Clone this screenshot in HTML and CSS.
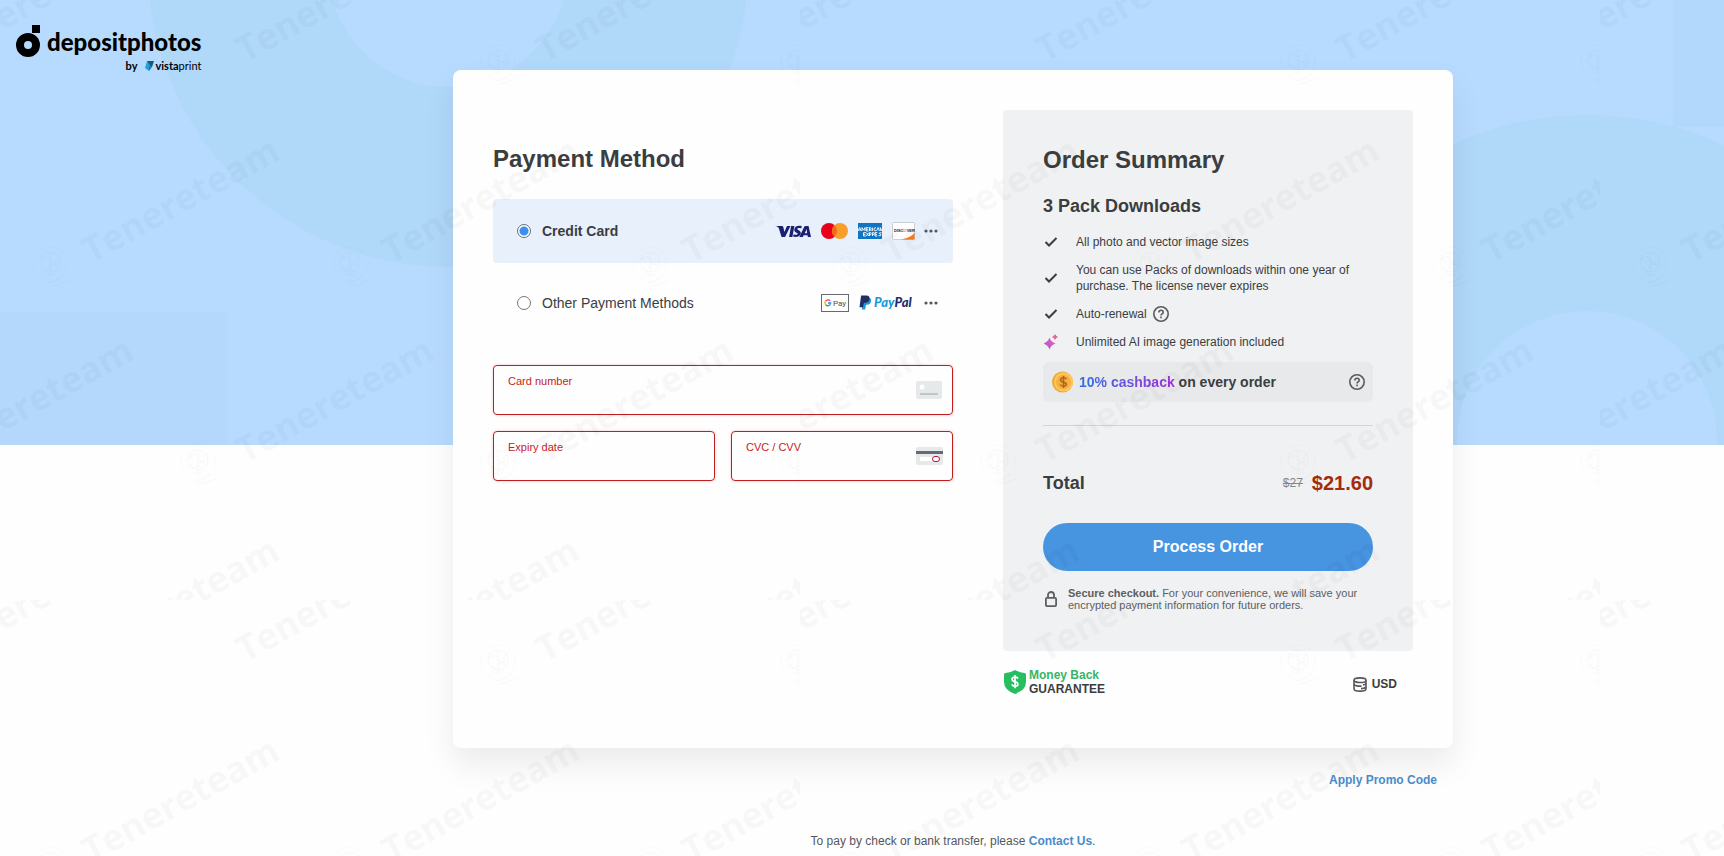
FILE: index.html
```html
<!DOCTYPE html>
<html lang="en">
<head>
<meta charset="utf-8">
<meta name="viewport" content="width=device-width, initial-scale=1">
<title>Depositphotos – Payment</title>
<link rel="stylesheet" href="styles.css">
</head>
<body>
<svg class="hero" viewBox="0 0 1724 445" preserveAspectRatio="xMidYMin slice" aria-hidden="true">
  <rect width="1724" height="445" fill="#b7dbff"/>
  <g fill="none" stroke="#b0d8f9">
    <circle cx="448" cy="-33" r="210" stroke-width="180"/>
    <circle cx="1587" cy="441" r="228" stroke-width="196"/>
  </g>
  <rect y="312" width="228" height="133" fill="#b4d7fc"/>
  <rect x="1673" width="51" height="127" fill="#b2d9fb"/>
</svg>

<div class="page">
  <header class="brand">
    <a class="logo" href="#" aria-label="depositphotos by vistaprint">
      <svg class="logo-mark" width="24" height="32" viewBox="0 0 24 32" aria-hidden="true">
        <rect x="16" width="8" height="8"/>
        <circle cx="12" cy="20" r="8" fill="none" stroke="#000" stroke-width="8"/>
      </svg>
      <span class="logo-words">
        <span class="logo-name">depositphotos</span>
        <span class="logo-by">
          <b>by</b>
          <svg width="9" height="10" viewBox="0 0 9 10" aria-hidden="true"><path d="M2 0h7L7 6 4 5z" fill="#155a78"/><path d="M2 0l3 4-1 6-4-3z" fill="#23a0d8"/><path d="M4 5l3 1-3 4z" fill="#1b789f"/></svg>
          <span class="vista"><b>vista</b>print</span>
        </span>
      </span>
    </a>
  </header>

  <div class="content">
    <main class="card">
      <form class="payment">
        <h1 class="title">Payment Method</h1>
        <label class="method method-active">
          <input class="radio" type="radio" name="method" checked>
          <span class="method-name">Credit Card</span>
          <span class="brands">
            <svg width="36" height="13" viewBox="0 0 34 14" preserveAspectRatio="none" role="img" aria-label="Visa"><g fill="#1a1f71"><path d="M0 1h6.200c.9 0 1.500.5 1.700 1.400l1 5.200L11.300 1h3.300L9.500 13H6.200L3.700 3.800C3.300 2.300 1.800 1.600 0 1.200z"/><path d="M15.200 1h3.100l-1.900 12h-3.100z"/><path d="M25.300 1.300l-.5 2.500c-1.900-.8-3.700-.5-3.700.4 0 1.300 3.300 1.400 3.300 4.500 0 3.300-3.700 5.100-7.300 3.800l.5-2.600c1.800 1 3.900.8 3.900-.4 0-1.300-3.300-1.500-3.300-4.500 0-3.400 3.700-4.900 7.100-3.700z"/><path fill-rule="evenodd" d="M29.200 1h2.500L34 13h-2.900l-.4-1.900h-3.600L26.300 13H23l4.600-11c.3-.7.800-1 1.600-1zm.7 3.400l-1.800 4.400h2.200z"/></g></svg>
            <svg width="27" height="16" viewBox="0 0 27 16" role="img" aria-label="Mastercard"><circle cx="8" cy="8" r="8" fill="#eb001b"/><circle cx="19" cy="8" r="8" fill="#f79e2b"/><path d="M13.500 2.200a8 8 0 010 11.600 8 8 0 010-11.600z" fill="#f7661b"/></svg>
            <svg width="24" height="16" viewBox="0 0 24 16" role="img" aria-label="American Express"><rect width="24" height="16" fill="#1275c4"/><g stroke="#fff" fill="none" stroke-width=".9"><path d="M0 8l1.600-3.500L3.200 8M.8 7h1.700M4 8V4.600l1.500 2.500L7 4.600V8M10.500 4.600H8.300V8h2.300M8.300 6.300h2M11.500 8V4.600h1.300q1 1 0 2h-1.300M13 6.600V8M14.600 4.600V8M18 4.800q-2-.5-2 1.500t2 1.500M18.600 8l1.500-3.500L21.500 8M22.300 8V4.600L24 8M7.800 9.600H5.500V13h2.300M5.500 11.300h2M8.300 9.600l2.500 3.400M10.800 9.600L8.300 13M11.500 13V9.600h1.300q1 1 0 2h-1.300M14.500 13V9.600h1.400q1 1 0 2h-1.400M19.300 9.600H17V13h2.300M17 11.300h2M23.500 9.800q-2.500-.5-2.300.7l1.700.9q.8 1.600-2.400 1.300"/></g></svg>
            <svg width="23" height="18" viewBox="0 0 23 18" role="img" aria-label="Discover"><rect x=".5" y=".5" width="22" height="17" rx="1" fill="#fff" stroke="#c9cdd2"/><path d="M22.500 11V17.500H9q9-1.500 13.500-6.500z" fill="#ef7a22"/><text x="2" y="10" class="disc">DISC<tspan fill="#ef7a22">O</tspan>VER</text></svg>
            <svg class="dots" width="14" height="4" viewBox="0 0 14 4" aria-label="more"><circle cx="2" cy="2" r="1.600"/><circle cx="7" cy="2" r="1.600"/><circle cx="12" cy="2" r="1.600"/></svg>
          </span>
        </label>
        <label class="method">
          <input class="radio" type="radio" name="method">
          <span class="method-name">Other Payment Methods</span>
          <span class="brands">
            <svg width="28" height="18" viewBox="0 0 28 18" role="img" aria-label="Google Pay"><rect x=".5" y=".5" width="27" height="17" fill="#fff" stroke="#66696d"/><g fill="none" stroke-width="1.300"><path d="M9.100 6.700A3 3 0 004.700 7" stroke="#ea4335"/><path d="M4.700 7a3 3 0 000 3.800" stroke="#fbbc04"/><path d="M4.700 10.800a3 3 0 004 .2" stroke="#34a853"/><path d="M8.700 11a3 3 0 001-2H7" stroke="#4285f4"/></g><text x="12" y="12" class="gpay">Pay</text></svg>
            <svg width="56" height="16" viewBox="0 0 56 16" role="img" aria-label="PayPal"><path d="M5.200 3h5.600c2 1 1.500 4.800-.3 6-1.400.9-3 .7-3.600 1L6.200 14.500H2.800z" fill="#179bd7"/><path d="M2.100.5h5.600c3.700.2 3.500 4.500 1.500 6.300-1.500 1.200-4 .9-4.400 1.500L4 12.200H.5z" fill="#222d65"/><text x="15" y="12" class="paypal"><tspan fill="#179bd7">Pay</tspan><tspan fill="#222d65">Pal</tspan></text></svg>
            <svg class="dots" width="14" height="4" viewBox="0 0 14 4" aria-label="more"><circle cx="2" cy="2" r="1.600"/><circle cx="7" cy="2" r="1.600"/><circle cx="12" cy="2" r="1.600"/></svg>
          </span>
        </label>

        <div class="fields">
          <div class="field field-wide">
            <div class="field-text">
              <label for="card-number">Card number</label>
              <input id="card-number" type="text" inputmode="numeric">
            </div>
            <svg width="28" height="18" viewBox="0 0 28 18" aria-hidden="true"><rect x="1" width="26" height="18" rx="2" fill="#e6e9ea"/><circle cx="7" cy="6" r="2.500" fill="#fff"/><rect x="5" y="12" width="18" height="2" fill="#c2c6c9"/></svg>
          </div>
          <div class="field">
            <div class="field-text">
              <label for="expiry">Expiry date</label>
              <input id="expiry" type="text" inputmode="numeric">
            </div>
          </div>
          <div class="field">
            <div class="field-text">
              <label for="cvc">CVC / CVV</label>
              <input id="cvc" type="text" inputmode="numeric">
            </div>
            <svg width="27" height="18" viewBox="0 0 27 18" aria-hidden="true"><rect width="27" height="18" rx="2" fill="#e6e9ea"/><rect y="4" width="27" height="3" fill="#666a78"/><rect x="4" y="10" width="12" height="4" fill="#fff"/><rect x="16.500" y="9.500" width="7" height="5" rx="2.500" fill="#fff" stroke="#b5123e"/></svg>
          </div>
        </div>
      </form>

      <aside class="side">
        <section class="summary">
          <h2 class="title">Order Summary</h2>
          <h3 class="pack">3 Pack Downloads</h3>
          <ul class="features">
            <li><svg class="check" width="14" height="10" viewBox="0 0 14 10" aria-hidden="true"><path d="M1.500 5l3.500 3.500 7.500-7.500"/></svg><span>All photo and vector image sizes</span></li>
            <li><svg class="check" width="14" height="10" viewBox="0 0 14 10" aria-hidden="true"><path d="M1.500 5l3.500 3.500 7.500-7.500"/></svg><span>You can use Packs of downloads within one year of purchase. The license never expires</span></li>
            <li><svg class="check" width="14" height="10" viewBox="0 0 14 10" aria-hidden="true"><path d="M1.500 5l3.500 3.500 7.500-7.500"/></svg><span>Auto-renewal</span>
              <button class="help" type="button" aria-label="About auto-renewal"><svg width="16" height="16" viewBox="0 0 16 16" aria-hidden="true"><circle cx="8" cy="8" r="7.200"/><path d="M5.800 6.400A2.200 2.200 0 018 4.200c1.300 0 2.200.8 2.200 2 0 1.500-2.200 1.700-2.200 3.200M8 10.500v1.700"/></svg></button></li>
            <li><svg width="14" height="16" viewBox="0 0 14 16" aria-hidden="true"><defs><linearGradient id="spark" x1="0" y1="1" x2="1" y2="0"><stop offset="0" stop-color="#a45be8"/><stop offset=".6" stop-color="#d860b4"/><stop offset="1" stop-color="#f07070"/></linearGradient></defs><path fill="url(#spark)" d="M5.500 3.500q1.500 4.500 6 6-4.500 1.500-6 6-1.500-4.500-6-6 4.500-1.500 6-6zM11 0q.8 2.200 3 3-2.200.8-3 3-.8-2.200-3-3 2.200-.8 3-3z"/></svg><span>Unlimited AI image generation included</span></li>
          </ul>
          <div class="cashback">
            <svg width="22" height="22" viewBox="0 0 22 22" aria-hidden="true"><circle cx="10.500" cy="11" r="10.500" fill="#eba93c"/><circle cx="11.500" cy="11" r="9.500" fill="#ffc85a"/><circle cx="11.500" cy="11" r="7.500" fill="#f6b143"/><path d="M14.500 8.200q-.8-1.400-3-1.400c-3.800 0-3.800 3.600-.4 4.200 4.400.8 4.200 4.200.4 4.200q-2.400 0-3.300-1.700M11.500 5v12" fill="none" stroke="#b5651a" stroke-width="1.600"/></svg>
            <p><span class="accent">10% cashback</span> on every order</p>
            <button class="help" type="button" aria-label="About cashback"><svg width="16" height="16" viewBox="0 0 16 16" aria-hidden="true"><circle cx="8" cy="8" r="7.200"/><path d="M5.800 6.400A2.200 2.200 0 018 4.200c1.300 0 2.200.8 2.200 2 0 1.500-2.200 1.700-2.200 3.200M8 10.500v1.700"/></svg></button>
          </div>
          <div class="total">
            <span class="total-name">Total</span>
            <s class="old-price">$27</s>
            <strong class="price">$21.60</strong>
          </div>
          <button class="submit" type="submit">Process Order</button>
          <div class="secure">
            <svg width="12" height="16" viewBox="0 0 12 16" fill="none" stroke="#5c6063" stroke-width="1.800" aria-hidden="true"><rect x=".9" y="6.900" width="10.200" height="8.200" rx="1"/><path d="M3 7V4a3 3 0 016 0v3"/></svg>
            <p><b>Secure checkout.</b> For your convenience, we will save your encrypted payment information for future orders.</p>
          </div>
        </section>
        <div class="side-foot">
          <div class="guarantee">
            <svg width="22" height="24" viewBox="0 0 22 24" aria-hidden="true"><path d="M11 0q5 3 9.500 3Q22 3 22 4.500V12q0 8-11 12Q0 20 0 12V4.500Q0 3 1.500 3 6 3 11 0z" fill="#27be62"/><path d="M14 8.600q-.8-1.500-3-1.500c-3.800 0-3.800 3.900-.3 4.500 4.400.8 4.100 4.500.3 4.500q-2.400 0-3.200-1.700M11 5v13.300" fill="none" stroke="#fff" stroke-width="1.700"/></svg>
            <p><span class="green">Money Back</span><br>GUARANTEE</p>
          </div>
          <button class="currency" type="button"><svg width="14" height="15" viewBox="0 0 14 15" fill="none" stroke="#55595c" stroke-width="1.600" aria-hidden="true"><ellipse cx="7" cy="3.200" rx="6" ry="2.300"/><path d="M1 3.200v8.500c0 3.200 12 3.200 12 0V3.200M1 6.800c0 1.400 2 2.100 4 2.300h3.500M13 6c0 .8-1.500 1.700-3 2M13 10c-.9 1-3 1.600-5 1.600"/></svg>USD</button>
        </div>
      </aside>
    </main>
    <div class="promo"><a href="#">Apply Promo Code</a></div>
    <footer class="note">To pay by check or bank transfer, please <a href="#">Contact Us</a>.</footer>
  </div>
</div>

<svg class="watermark" aria-hidden="true">
  <defs>
    <g id="word"><text class="wm-text" transform="rotate(-29)">Tenereteam</text></g>
    <g id="seal" fill="none" stroke="#000" stroke-width="1">
      <circle r="17" stroke-dasharray="2 1"/><circle cy="-2" r="10"/><path d="M-9-4q5-8 9 0t9 0M-8 3q4 6 8 0t8 0M0-12V12M-6 9q6 6 12 0M-10-9l5 5M10-9l-5 5"/>
      <path d="M0 23l4-2 3 1 4-3 4-1 5-3M-2 19q8 0 14-8"/>
    </g>
    <pattern id="tile" width="800" height="600" patternUnits="userSpaceOnUse">
      <use href="#word" x="-55" y="63"/><use href="#word" x="245" y="63"/><use href="#word" x="545" y="63"/>
      <use href="#word" x="91" y="264"/><use href="#word" x="391" y="264"/><use href="#word" x="691" y="264"/>
      <use href="#word" x="-55" y="464"/><use href="#word" x="245" y="464"/><use href="#word" x="545" y="464"/>
      <use href="#word" x="91" y="664"/><use href="#word" x="391" y="664"/><use href="#word" x="691" y="664"/>
      <use href="#seal" x="498" y="62"/><use href="#seal" x="798" y="62"/>
      <use href="#seal" x="50" y="264"/><use href="#seal" x="350" y="264"/><use href="#seal" x="650" y="264"/>
      <use href="#seal" x="198" y="462"/><use href="#seal" x="498" y="462"/><use href="#seal" x="798" y="462"/>
    </pattern>
  </defs>
  <rect width="100%" height="100%" fill="url(#tile)"/>
</svg>
</body>
</html>
```

FILE: styles.css
```css
* { box-sizing: border-box; }

body {
  position: relative;
  margin: 0;
  min-height: 100vh;
  background: #fefefe;
  color: #3b3d3f;
  font-family: "Liberation Sans", Arial, sans-serif;
  font-size: 12px;
  line-height: 16px;
}

h1, h2, h3, p, ul { margin: 0; padding: 0; }
button { font-family: inherit; cursor: pointer; }
svg { flex: none; }

a { color: #4a8bca; font-weight: bold; text-decoration: none; }

.hero {
  position: absolute;
  top: 0;
  left: 0;
  width: 100%;
  height: 445px;
}

.watermark {
  position: absolute;
  top: 0;
  left: 0;
  width: 100%;
  height: 100%;
  opacity: .022;
  pointer-events: none;
}

.wm-text { font: bold 36px "Open Sans", sans-serif; }

.page { position: relative; display: flex; }

.brand { flex: none; width: 182px; padding: 25px 0 0 16px; }

.logo { display: flex; gap: 7px; color: #000; font-family: Lato, sans-serif; font-weight: normal; }
.logo-words { display: flex; flex-direction: column; }
.logo-name { font-size: 24px; font-weight: 900; line-height: 34px; }
.logo-by { display: flex; align-items: center; justify-content: flex-end; gap: 8px; font-size: 11px; line-height: 14px; }
.vista { margin-left: -7px; }

.content { flex: 1; padding-top: 70px; }

.card {
  display: flex;
  gap: 50px;
  max-width: 1000px;
  margin: 0 auto;
  padding: 40px 40px 52px;
  border-radius: 8px;
  background: #fefefe;
  box-shadow: 0 16px 32px rgba(0, 0, 0, .08);
}

.payment { flex: 1; padding-top: 34px; }

.title { font-size: 24px; line-height: 30px; }

.method {
  display: flex;
  align-items: center;
  height: 64px;
  margin-bottom: 8px;
  padding: 0 15px 0 24px;
  border-radius: 4px;
  font-size: 14px;
}
.method-active { margin-top: 25px; background: #e8f0fb; font-weight: bold; }
.method-name { margin-left: 11px; }

.radio {
  appearance: none;
  flex: none;
  width: 14px;
  height: 14px;
  margin: 0;
  border: 1px solid #777;
  border-radius: 50%;
  background: #fff;
}
.radio:checked { border-color: #66707c; background: radial-gradient(circle, #3b8ff0 4px, #fff 5px); }

.brands { display: flex; align-items: center; gap: 10px; margin-left: auto; }
.dots { margin-left: -1px; fill: #55585c; }
.disc { font: bold 4px "Liberation Sans", sans-serif; fill: #222; }
.gpay { font: 8px Roboto, sans-serif; fill: #4c5053; }
.paypal { font: italic 900 13px Lato, sans-serif; }

.fields { display: grid; grid-template-columns: 1fr 1fr; gap: 16px; margin-top: 30px; }
.field {
  display: flex;
  align-items: center;
  height: 50px;
  padding: 0 9px 0 14px;
  border: 1px solid #bd1f1f;
  border-radius: 4px;
  box-shadow: 0 0 3px rgba(220, 60, 50, .3);
}
.field-wide { grid-column: 1 / -1; }
.field-text { display: flex; flex: 1; flex-direction: column; min-width: 0; }
.field label { color: #c9211e; font-size: 11px; line-height: 14px; }
.field input { width: 100%; height: 18px; padding: 0; border: 0; outline: 0; background: none; font-size: 14px; }

.side { flex: none; width: 410px; }
.summary { padding: 35px 40px; border-radius: 4px; background: #eff1f2; }
.pack { margin-top: 20px; font-size: 18px; line-height: 22px; }

.features { display: flex; flex-direction: column; gap: 12px; margin-top: 17px; list-style: none; }
.features li { display: flex; align-items: center; padding-left: 1px; }
.features li > span { margin-left: 18px; }
.check { fill: none; stroke: #3b3d3f; stroke-width: 2; }
.help { display: flex; padding: 0; border: 0; background: none; }
.help svg { fill: none; stroke: #595c5f; stroke-width: 1.600; }
.features .help { margin-left: 6px; }

.cashback {
  display: flex;
  align-items: center;
  gap: 5px;
  height: 40px;
  margin-top: 12px;
  padding: 0 8px 0 9px;
  border-radius: 6px;
  background: #e7e9ea;
  font-size: 14px;
  font-weight: bold;
}
.cashback .help { margin-left: auto; }
.accent { background: linear-gradient(90deg, #2f6fe0, #a52fdc); background-clip: text; color: transparent; }

.total {
  display: flex;
  align-items: center;
  margin-top: 23px;
  padding-top: 45px;
  border-top: 1px solid #d2d5d7;
  line-height: 24px;
}
.total-name { margin-right: auto; font-size: 18px; font-weight: bold; }
.old-price { color: #85888b; }
.price { margin-left: 9px; color: #a52a0d; font-size: 20px; }

.submit {
  width: 100%;
  height: 48px;
  margin-top: 28px;
  border: 0;
  border-radius: 24px;
  background: #4794e1;
  color: #fff;
  font-size: 16px;
  font-weight: bold;
}

.secure { display: flex; align-items: center; gap: 11px; margin-top: 16px; padding: 0 2px 5px; color: #5c6063; font-size: 11px; line-height: 12px; }

.side-foot { display: flex; align-items: center; justify-content: space-between; margin-top: 17px; padding-right: 16px; }
.guarantee { display: flex; align-items: center; gap: 3px; padding-left: 1px; font-weight: bold; line-height: 14px; }
.green { color: #38b565; }
.currency { display: flex; align-items: center; gap: 5px; padding: 4px 0 0; border: 0; background: none; color: inherit; font-size: 12px; font-weight: bold; }

.promo { max-width: 1000px; margin: 24px auto 0; padding-right: 16px; text-align: right; }
.note { margin-top: 45px; color: #55585c; text-align: center; }
```
